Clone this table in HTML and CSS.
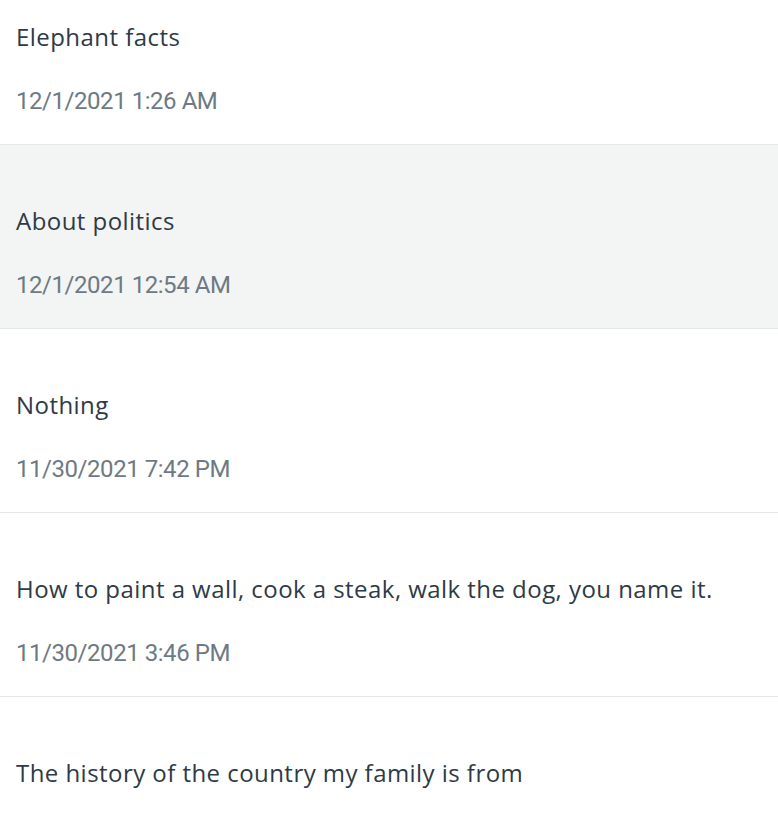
FILE: index.html
```html
<!DOCTYPE html>
<html>
<head>
<meta charset="utf-8">
<link rel="stylesheet" href="styles.css">
</head>
<body>
<ul class="list">
  <li class="item"><div class="title">Elephant facts</div><div class="date">12/1/2021 1:26 AM</div></li>
  <li class="item item--active"><div class="title">About politics</div><div class="date">12/1/2021 12:54 AM</div></li>
  <li class="item"><div class="title">Nothing</div><div class="date">11/30/2021 7:42 PM</div></li>
  <li class="item"><div class="title">How to paint a wall, cook a steak, walk the dog, you name it.</div><div class="date">11/30/2021 3:46 PM</div></li>
  <li class="item"><div class="title">The history of the country my family is from</div></li>
</ul>
</body>
</html>
```
FILE: styles.css
```css
html, body {
  margin: 0;
  padding: 0;
  background: #ffffff;
  overflow: hidden;
}
.list {
  list-style: none;
  margin: -39px 0 0 0;
  padding: 0;
  font-size: 24px;
}
.item {
  box-sizing: border-box;
  height: 184px;
  padding: 60px 16px 0 16px;
  border-bottom: 1px solid #e6e7e8;
  display: flex;
  flex-direction: column;
  gap: 32px;
}
.item--active {
  background: #f3f4f4;
}
.title {
  font-family: "Open Sans", sans-serif;
  letter-spacing: 0.45px;
  line-height: 32px;
  color: #2e3a45;
  white-space: nowrap;
}
.date {
  font-family: Roboto, sans-serif;
  letter-spacing: -0.45px;
  line-height: 32px;
  color: #6e7a83;
  white-space: nowrap;
}
```
